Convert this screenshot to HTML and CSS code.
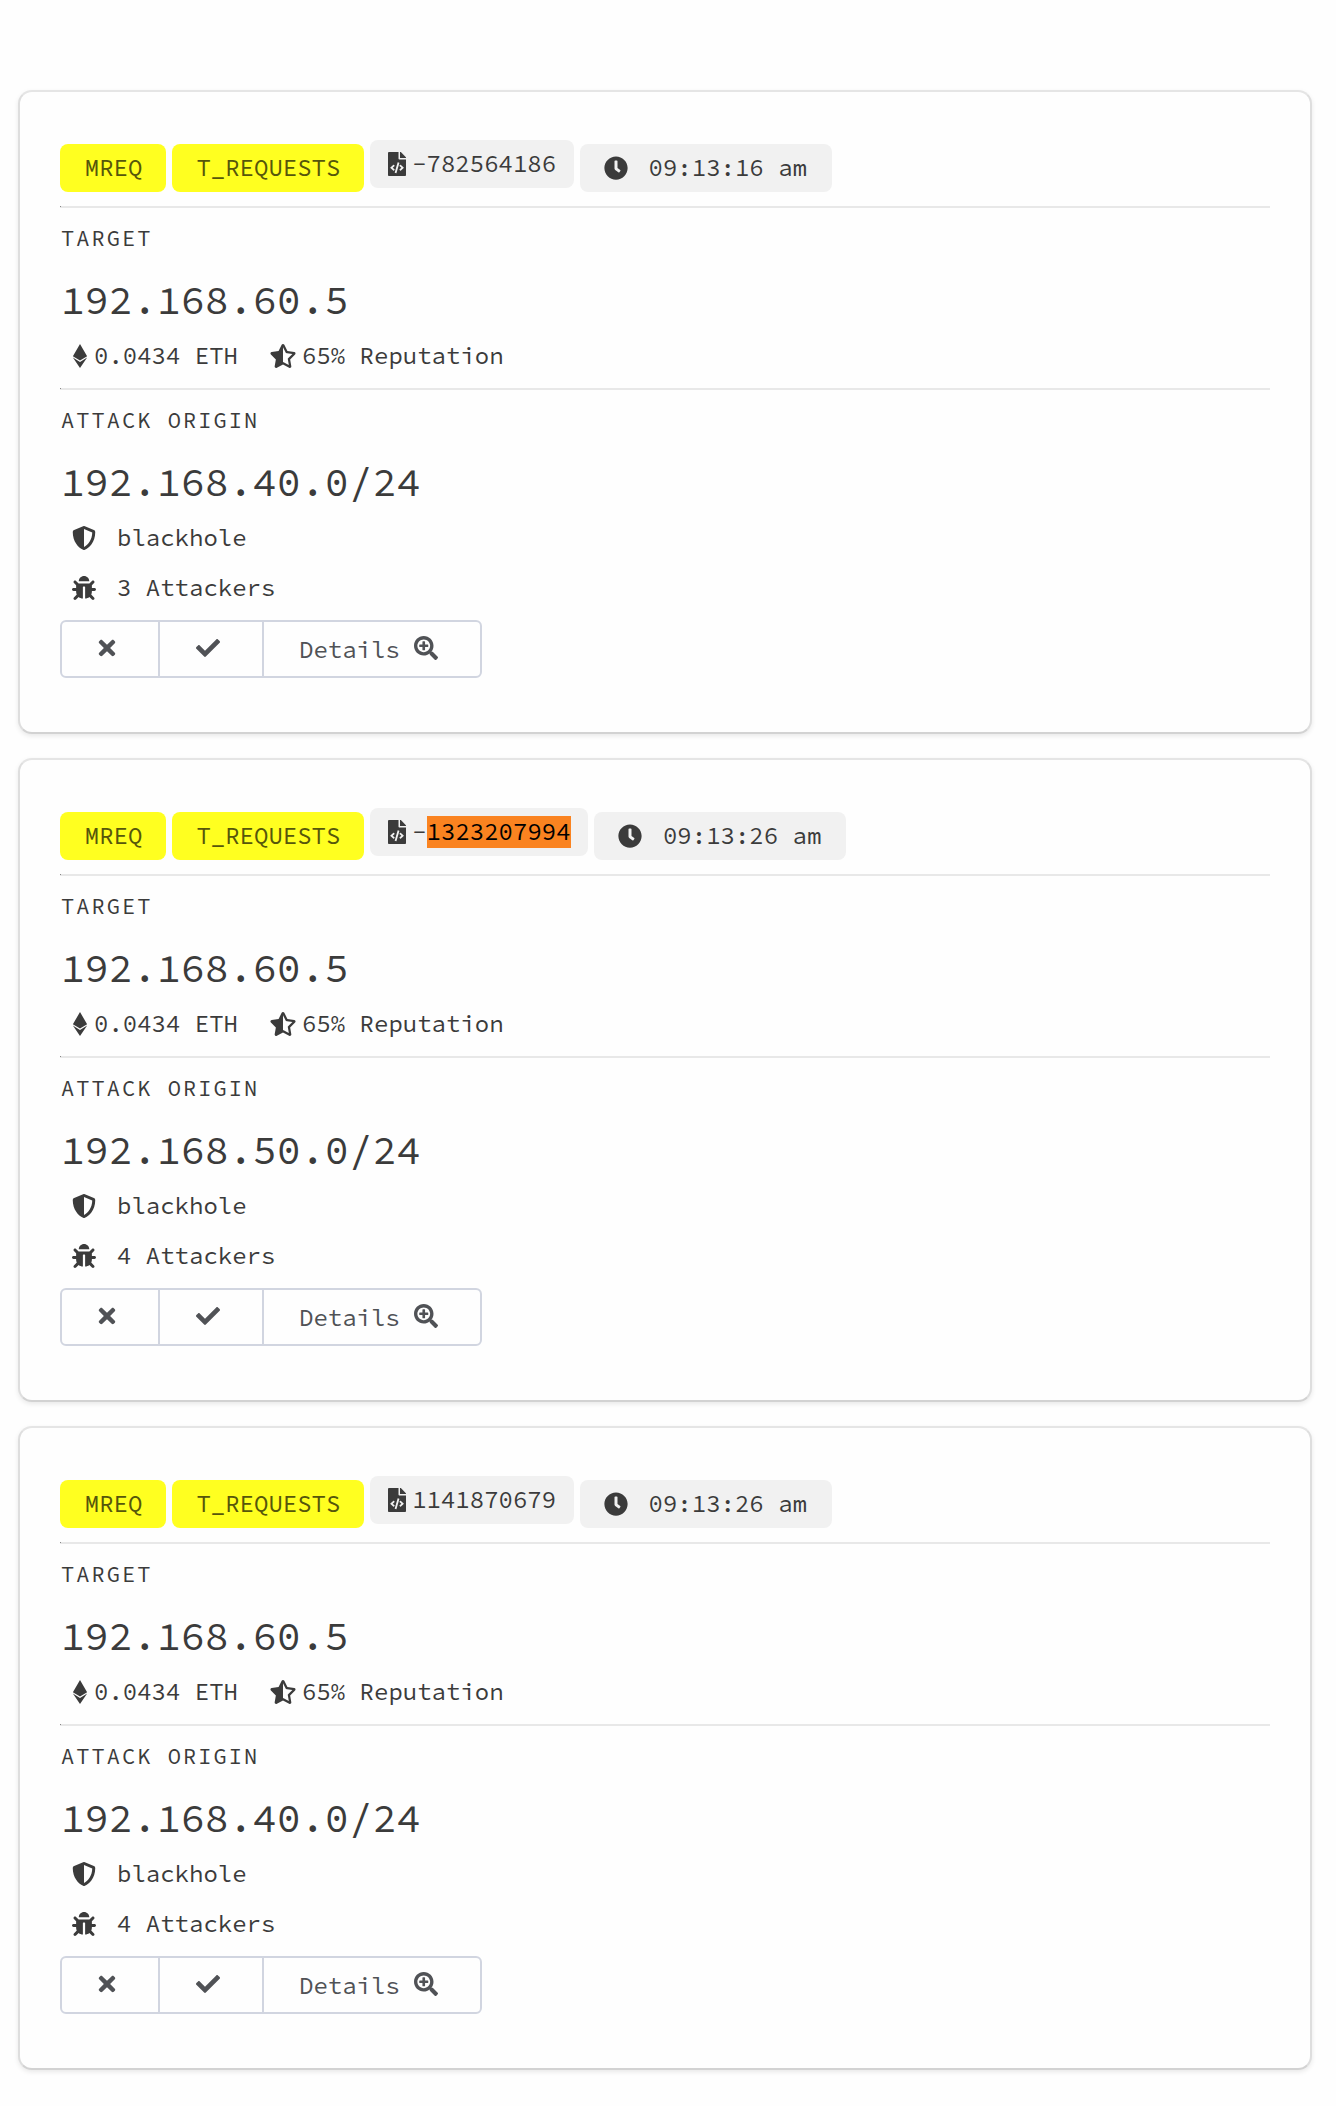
FILE: index.html
```
<!DOCTYPE html>
<html lang="en">
<head>
<meta charset="utf-8">
<title>Requests</title>
<link rel="stylesheet" href="styles.css">
</head>
<body>
<svg class="sprite" aria-hidden="true">
  <symbol id="file" viewBox="0 0 384 512"><path d="M384 121.941V128H256V0h6.059c6.365 0 12.47 2.529 16.971 7.029l97.941 97.941A24.005 24.005 0 0 1 384 121.941zM248 160c-13.2 0-24-10.8-24-24V0H24C10.745 0 0 10.745 0 24v464c0 13.255 10.745 24 24 24h336c13.255 0 24-10.745 24-24V160H248zM123.206 400.505a5.4 5.4 0 0 1-7.633.246l-64.866-60.812a5.4 5.4 0 0 1 0-7.879l64.866-60.812a5.4 5.4 0 0 1 7.633.246l19.579 20.885a5.4 5.4 0 0 1-.372 7.747L101.65 336l40.763 35.874a5.4 5.4 0 0 1 .372 7.747l-19.579 20.884zm51.295 50.479l-27.453-7.97a5.402 5.402 0 0 1-3.681-6.692l61.44-211.626a5.402 5.402 0 0 1 6.692-3.681l27.452 7.97a5.4 5.4 0 0 1 3.68 6.692l-61.44 211.626a5.397 5.397 0 0 1-6.69 3.681zm160.792-111.045l-64.866 60.812a5.4 5.4 0 0 1-7.633-.246l-19.58-20.885a5.4 5.4 0 0 1 .372-7.747L284.35 336l-40.763-35.874a5.4 5.4 0 0 1-.372-7.747l19.58-20.885a5.4 5.4 0 0 1 7.633-.246l64.866 60.812a5.4 5.4 0 0 1-.001 7.879z"/></symbol>
  <symbol id="clock" viewBox="0 0 512 512"><path d="M256,8C119,8,8,119,8,256S119,504,256,504,504,393,504,256,393,8,256,8Zm92.49,313h0l-20,25a16,16,0,0,1-22.49,2.5h0l-67-49.72a40,40,0,0,1-15-31.23V112a16,16,0,0,1,16-16h32a16,16,0,0,1,16,16V256l58,42.5A16,16,0,0,1,348.49,321Z"/></symbol>
  <symbol id="eth" viewBox="0 0 320 512"><path d="M311.9 260.8L160 353.6 8 260.8 160 0l151.9 260.8zM160 383.4L8 290.6 160 512l152-221.4-152 92.8z"/></symbol>
  <symbol id="star" viewBox="0 0 536 512"><path d="M508.55 171.51L362.18 150.2 296.77 17.81C290.89 5.98 279.42 0 267.95 0c-11.4 0-22.79 5.9-28.69 17.81l-65.43 132.38-146.38 21.29c-26.25 3.8-36.77 36.09-17.74 54.59l105.89 103-25.06 145.48C86.98 495.33 103.57 512 122.15 512c4.93 0 10-1.17 14.87-3.75l130.95-68.68 130.94 68.7c4.86 2.55 9.92 3.71 14.83 3.71 18.6 0 35.22-16.61 31.66-37.4l-25.03-145.49 105.91-102.98c19.04-18.5 8.52-50.8-17.73-54.6zm-121.74 123.2l-18.12 17.62 4.28 24.88 19.52 113.45-102.13-53.59-22.38-11.74.03-317.19 51.03 103.29 11.18 22.63 25.01 3.64 114.23 16.63-82.65 80.38z"/></symbol>
  <symbol id="shield" viewBox="0 0 512 512"><path d="M466.5 83.7l-192-80a48.15 48.15 0 0 0-36.9 0l-192 80C27.7 91.1 16 108.6 16 128c0 198.5 114.5 335.7 221.5 380.3 11.8 4.9 25.1 4.9 36.9 0C360.1 472.6 496 349.3 496 128c0-19.4-11.7-36.9-29.5-44.3zM256.1 446.3l-.1-381 175.9 73.3c-3.3 151.4-82.1 261.1-175.8 307.7z"/></symbol>
  <symbol id="bug" viewBox="0 0 512 512"><path d="M511.988 288.9c-.478 17.43-15.217 31.1-32.653 31.1H424v16c0 21.864-4.882 42.584-13.6 61.145l60.228 60.228c12.496 12.497 12.496 32.758 0 45.255-12.498 12.497-32.759 12.496-45.256 0l-54.736-54.736C345.886 467.965 314.351 480 280 480V236c0-6.627-5.373-12-12-12h-24c-6.627 0-12 5.373-12 12v244c-34.351 0-65.886-12.035-90.636-32.108l-54.736 54.736c-12.498 12.497-32.759 12.496-45.256 0-12.496-12.497-12.496-32.758 0-45.255l60.228-60.228C92.882 378.584 88 357.864 88 336v-16H32.666C15.23 320 .491 306.33.013 288.9-.484 270.816 14.028 256 32 256h56v-58.745l-46.628-46.628c-12.496-12.497-12.496-32.758 0-45.255 12.498-12.497 32.758-12.497 45.256 0L141.255 160h229.489l54.627-54.627c12.498-12.497 32.758-12.497 45.256 0 12.496 12.497 12.496 32.758 0 45.255L424 197.255V256h56c17.972 0 32.484 14.816 31.988 32.9zM257 0c-61.856 0-112 50.144-112 112h224C369 50.144 318.856 0 257 0z"/></symbol>
  <symbol id="times" viewBox="0 0 352 512"><path d="M242.72 256l100.07-100.07c12.28-12.28 12.28-32.19 0-44.48l-22.24-22.24c-12.28-12.28-32.19-12.28-44.48 0L176 189.28 75.93 89.21c-12.28-12.28-32.19-12.28-44.48 0L9.21 111.45c-12.28 12.28-12.28 32.19 0 44.48L109.28 256 9.21 356.07c-12.28 12.28-12.28 32.19 0 44.48l22.24 22.24c12.28 12.28 32.2 12.28 44.48 0L176 322.72l100.07 100.07c12.28 12.28 32.2 12.28 44.48 0l22.24-22.24c12.28-12.28 12.28-32.19 0-44.48L242.72 256z"/></symbol>
  <symbol id="check" viewBox="0 0 512 512"><path d="M173.898 439.404l-166.4-166.4c-9.997-9.997-9.997-26.206 0-36.204l36.203-36.204c9.997-9.998 26.207-9.998 36.204 0L192 312.69 432.095 72.596c9.997-9.997 26.207-9.997 36.204 0l36.203 36.204c9.997 9.997 9.997 26.206 0 36.204l-294.4 294.401c-9.998 9.997-26.207 9.997-36.204-.001z"/></symbol>
  <symbol id="zoom" viewBox="0 0 512 512"><path d="M304 192v32c0 6.6-5.4 12-12 12h-56v56c0 6.6-5.4 12-12 12h-32c-6.6 0-12-5.4-12-12v-56h-56c-6.6 0-12-5.4-12-12v-32c0-6.6 5.4-12 12-12h56v-56c0-6.6 5.4-12 12-12h32c6.6 0 12 5.4 12 12v56h56c6.6 0 12 5.4 12 12zm201 284.7L476.7 505c-9.4 9.4-24.6 9.4-33.9 0L343 405.3c-4.5-4.5-7-10.6-7-17V372c-35.3 27.6-79.7 44-128 44C93.1 416 0 322.9 0 208S93.1 0 208 0s208 93.1 208 208c0 48.3-16.4 92.7-44 128h16.3c6.4 0 12.5 2.5 17 7l99.7 99.7c9.3 9.4 9.3 24.6 0 34zM344 208c0-75.2-60.8-136-136-136S72 132.8 72 208s60.8 136 136 136 136-60.8 136-136z"/></symbol>
</svg>
<main class="list">
  <section class="card">
    <div class="tags">
      <span class="tag yellow">MREQ</span>
      <span class="tag yellow">T_REQUESTS</span>
      <span class="tag file"><svg class="icon i-file"><use href="#file"/></svg>-782564186</span>
      <span class="tag time"><svg class="icon"><use href="#clock"/></svg>09:13:16 am</span>
    </div>
    <hr>
    <div class="label">TARGET</div>
    <h2 class="address">192.168.60.5</h2>
    <div class="row stats">
      <svg class="icon i-eth"><use href="#eth"/></svg><span class="eth">0.0434 ETH</span>
      <svg class="icon i-star"><use href="#star"/></svg><span>65% Reputation</span>
    </div>
    <hr>
    <div class="label">ATTACK ORIGIN</div>
    <h2 class="address">192.168.40.0/24</h2>
    <div class="row"><svg class="icon"><use href="#shield"/></svg><span class="detail">blackhole</span></div>
    <div class="row attackers"><svg class="icon"><use href="#bug"/></svg><span class="detail">3 Attackers</span></div>
    <div class="buttons">
      <button class="btn reject" aria-label="Reject"><svg class="icon i-times"><use href="#times"/></svg></button>
      <button class="btn accept" aria-label="Accept"><svg class="icon"><use href="#check"/></svg></button>
      <button class="btn more"><span class="caption">Details</span><svg class="icon"><use href="#zoom"/></svg></button>
    </div>
  </section>
  <section class="card">
    <div class="tags">
      <span class="tag yellow">MREQ</span>
      <span class="tag yellow">T_REQUESTS</span>
      <span class="tag file"><svg class="icon i-file"><use href="#file"/></svg>-<mark>1323207994</mark></span>
      <span class="tag time"><svg class="icon"><use href="#clock"/></svg>09:13:26 am</span>
    </div>
    <hr>
    <div class="label">TARGET</div>
    <h2 class="address">192.168.60.5</h2>
    <div class="row stats">
      <svg class="icon i-eth"><use href="#eth"/></svg><span class="eth">0.0434 ETH</span>
      <svg class="icon i-star"><use href="#star"/></svg><span>65% Reputation</span>
    </div>
    <hr>
    <div class="label">ATTACK ORIGIN</div>
    <h2 class="address">192.168.50.0/24</h2>
    <div class="row"><svg class="icon"><use href="#shield"/></svg><span class="detail">blackhole</span></div>
    <div class="row attackers"><svg class="icon"><use href="#bug"/></svg><span class="detail">4 Attackers</span></div>
    <div class="buttons">
      <button class="btn reject" aria-label="Reject"><svg class="icon i-times"><use href="#times"/></svg></button>
      <button class="btn accept" aria-label="Accept"><svg class="icon"><use href="#check"/></svg></button>
      <button class="btn more"><span class="caption">Details</span><svg class="icon"><use href="#zoom"/></svg></button>
    </div>
  </section>
  <section class="card">
    <div class="tags">
      <span class="tag yellow">MREQ</span>
      <span class="tag yellow">T_REQUESTS</span>
      <span class="tag file"><svg class="icon i-file"><use href="#file"/></svg>1141870679</span>
      <span class="tag time"><svg class="icon"><use href="#clock"/></svg>09:13:26 am</span>
    </div>
    <hr>
    <div class="label">TARGET</div>
    <h2 class="address">192.168.60.5</h2>
    <div class="row stats">
      <svg class="icon i-eth"><use href="#eth"/></svg><span class="eth">0.0434 ETH</span>
      <svg class="icon i-star"><use href="#star"/></svg><span>65% Reputation</span>
    </div>
    <hr>
    <div class="label">ATTACK ORIGIN</div>
    <h2 class="address">192.168.40.0/24</h2>
    <div class="row"><svg class="icon"><use href="#shield"/></svg><span class="detail">blackhole</span></div>
    <div class="row attackers"><svg class="icon"><use href="#bug"/></svg><span class="detail">4 Attackers</span></div>
    <div class="buttons">
      <button class="btn reject" aria-label="Reject"><svg class="icon i-times"><use href="#times"/></svg></button>
      <button class="btn accept" aria-label="Accept"><svg class="icon"><use href="#check"/></svg></button>
      <button class="btn more"><span class="caption">Details</span><svg class="icon"><use href="#zoom"/></svg></button>
    </div>
  </section>
</main>
</body>
</html>
```
FILE: styles.css
```
* {
  box-sizing: border-box;
}

body {
  margin: 0;
  background: #fefefe;
  color: #3b3b3b;
  font: 24px/32px "Source Code Pro", "Liberation Mono", monospace;
}

.sprite {
  display: none;
}

.list {
  display: flex;
  flex-direction: column;
  gap: 24px;
  padding: 90px 24px 36px 18px;
}

.card {
  height: 644px;
  padding: 48px 40px;
  border: 2px solid #dedede;
  border-top-color: #e5e5e5;
  border-bottom-color: #d2d2d2;
  border-radius: 14px;
  background: #fefefe;
  box-shadow: 0 2px 5px rgba(0, 0, 0, 0.09);
}

.icon {
  flex: none;
  width: 24px;
  height: 24px;
  fill: currentColor;
}

.tags {
  display: flex;
  align-items: flex-start;
  gap: 6px;
  height: 66px;
}

.tag {
  display: flex;
  align-items: center;
  height: 48px;
  margin-top: 4px;
  padding: 0 24px;
  border-radius: 8px;
  background: #f1f1f1;
  white-space: pre;
}

.yellow {
  padding: 0 23.2px 0 24.8px;
  background: #ffff20;
  color: #56560b;
}

.file {
  margin-top: 0;
  padding: 0 17.4px 0 18px;
}

.file .i-file {
  width: 18px;
  margin-right: 6.6px;
}

.time {
  padding-right: 24.6px;
}

.time .icon {
  margin-right: 21px;
}

mark {
  background: #fa8320;
  color: #000;
}

hr {
  height: 2px;
  margin: 0;
  border: 0;
  background: linear-gradient(#888, #888) 0 0 / 1px 1px no-repeat #e8e8e8;
}

.label {
  margin: 15px 0 23px;
  padding-left: 1px;
  font-size: 22px;
  line-height: 30px;
  letter-spacing: 2.05px;
}

.address {
  margin: 0 0 16px;
  padding-left: 0.8px;
  font-size: 40px;
  font-weight: 400;
  line-height: 48px;
}

.row {
  display: flex;
  align-items: center;
  height: 32px;
  padding-left: 12px;
}

.stats {
  margin-bottom: 16px;
}

.i-eth {
  width: 16px;
  margin-right: 6px;
}

.eth {
  margin-right: 32px;
}

.i-star {
  width: 26px;
  margin-right: 6px;
}

.detail {
  margin-left: 21px;
}

.attackers {
  margin: 18px 0 16px;
}

.buttons {
  display: flex;
  width: 422px;
  height: 58px;
  border: 2px solid #d1d5e0;
  border-radius: 6px;
}

.btn {
  display: flex;
  align-items: center;
  padding: 0;
  border: 0;
  background: none;
  color: #505256;
  font: inherit;
}

.btn .icon {
  margin-bottom: 2px;
}

.btn + .btn {
  border-left: 2px solid #d1d5e0;
}

.reject {
  width: 96px;
  padding-left: 36px;
}

.i-times {
  width: 18px;
}

.accept {
  width: 104px;
  padding-left: 36px;
}

.more {
  padding-left: 35px;
}

.caption {
  padding-top: 2px;
}

.more .icon {
  margin-left: 14px;
}
```
